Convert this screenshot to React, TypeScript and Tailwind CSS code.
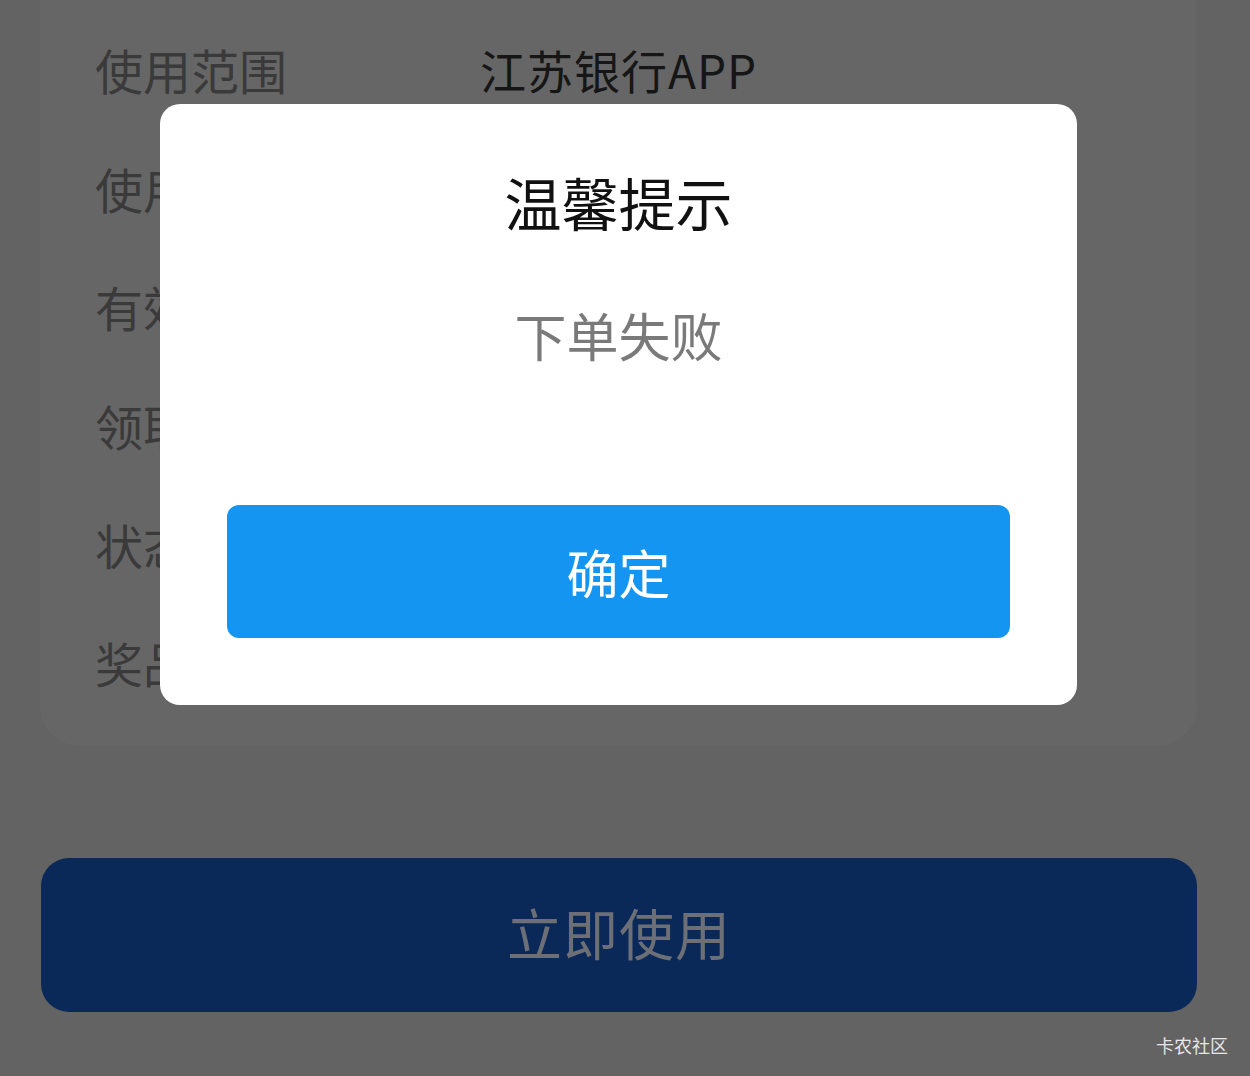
import React from "react";

const rows = [
  { label: "使用范围", value: "江苏银行APP" },
  { label: "使用时间", value: "" },
  { label: "有效期", value: "" },
  { label: "领取时间", value: "" },
  { label: "状态", value: "" },
  { label: "奖品", value: "" },
];

export default function App() {
  return (
    <div
      className="relative w-[1250px] h-[1076px] overflow-hidden bg-[#636363]"
      style={{ fontFamily: '"Noto Sans CJK SC", "Noto Sans", sans-serif' }}
    >
      {/* background detail card */}
      <div className="mx-[40px] w-[1157px] bg-[#666666] rounded-b-[40px] pt-[10px] pb-[24px]">
        {rows.map((r) => (
          <div key={r.label} className="flex items-center h-[118.6px] pl-[55px]">
            <div className="w-[385px] text-[48px] leading-none text-[#3a3a3a]">{r.label}</div>
            <div className="text-[46px] leading-none text-[#161616] tracking-[1px]">{r.value}</div>
          </div>
        ))}
      </div>

      {/* use now button */}
      <div className="mx-[41px] mt-[112px] w-[1156px] h-[154px] rounded-[28px] bg-[#0a2958] flex items-center justify-center pb-[6px]">
        <span className="text-[55px] leading-none text-[#6c6f75] tracking-[1px]">立即使用</span>
      </div>

      {/* watermark */}
      <div className="absolute right-[22px] top-[1036px] text-[18px] leading-none text-[#e6e6e6]">卡农社区</div>

      {/* dialog */}
      <div className="absolute left-[160px] top-[104px] w-[917px] h-[601px] bg-white rounded-[20px] flex flex-col items-center">
        <div className="mt-[69px] text-[57px] leading-none text-[#111111]">温馨提示</div>
        <div className="mt-[79px] text-[52px] leading-none text-[#7a7a7a]">下单失败</div>
        <button className="mt-[144px] w-[783px] h-[133px] rounded-[12px] bg-[#1595f2] text-white text-[52px] leading-none flex items-center justify-center">
          确定
        </button>
      </div>
    </div>
  );
}
